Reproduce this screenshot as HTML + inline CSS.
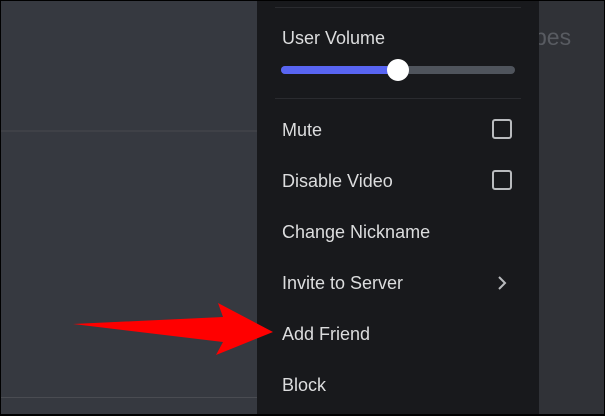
<!DOCTYPE html><html><head><style>
*{margin:0;padding:0;box-sizing:border-box}
body{width:605px;height:416px;overflow:hidden;background:#000;font-family:"Liberation Sans",sans-serif;position:relative}
#wrap{position:absolute;left:1px;top:1px;width:603px;height:413px;background:#363940;overflow:hidden}
.abs{position:absolute}
.it{position:absolute;left:281px;color:#dcddde;font-size:18px;line-height:20px}
.cb{position:absolute;left:491px;width:20px;height:20px;border:2px solid #b9bbbe;border-radius:3px}
</style></head><body><div id="wrap">
<div class="abs" style="left:0;top:129px;width:256px;height:2px;background:#3f4147"></div>
<div class="abs" style="left:0;top:396px;width:256px;height:1px;background:#4a4c52"></div>
<div class="abs" style="left:538px;top:0;width:70px;height:416px;background:#303237"></div>
<div class="abs" style="left:533px;top:23px;color:#585b61;font-size:23px">pes</div>
<div class="abs" style="left:256px;top:0;width:282px;height:416px;background:#18191c"></div>
<div class="abs" style="left:274px;top:6px;width:246px;height:1px;background:#2a2b2f"></div>
<div class="abs" style="left:274px;top:97px;width:246px;height:1px;background:#2a2b2f"></div>
<div class="it" style="top:27px">User Volume</div>
<div class="abs" style="left:280px;top:65px;width:234px;height:8px;border-radius:4px;background:#4f545c"></div>
<div class="abs" style="left:280px;top:65px;width:117px;height:8px;border-radius:4px;background:#5865f2"></div>
<div class="abs" style="left:386px;top:58px;width:22px;height:22px;border-radius:50%;background:#fff"></div>
<div class="it" style="top:119px">Mute</div><div class="cb" style="top:118px"></div>
<div class="it" style="top:170px">Disable Video</div><div class="cb" style="top:169px"></div>
<div class="it" style="top:221px">Change Nickname</div>
<div class="it" style="top:272px">Invite to Server</div>
<svg class="abs" style="left:495px;top:274px" width="12" height="16"><path d="M3 2l6 6-6 6" stroke="#b9bbbe" stroke-width="2" fill="none"/></svg>
<div class="it" style="top:323px">Add Friend</div>
<div class="it" style="top:374px">Block</div>
<svg class="abs" style="left:-1px;top:-1px" width="605" height="416"><path d="M73 324 L223 317 L218 303 L273 332 L216 355 L223 342 Z" fill="#ff0000"/></svg>
</div></body></html>
